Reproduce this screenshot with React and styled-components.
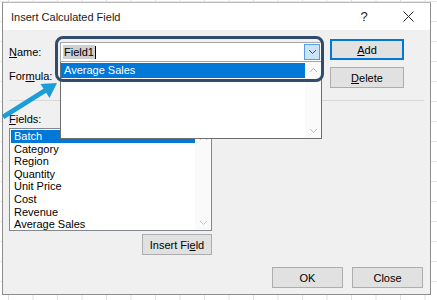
import React from "react";
import styled, { createGlobalStyle } from "styled-components";

const GlobalStyle = createGlobalStyle`
    body {
        margin: 0;
        font-family: "Liberation Sans", Arial, sans-serif;
        font-size: 11px;
        color: #000;
    }
`;

const Page = styled.div`
    position: relative;
    width: 437px;
    height: 300px;
    overflow: hidden;
    padding: 2px 0 0 2px;
    box-sizing: border-box;
    background-color: #fff;
    background-image:
        linear-gradient(to right, #e0e0e0 1px, transparent 1px),
        linear-gradient(to bottom, #e6e6e6 1px, transparent 1px);
    background-size: 24.5px 100%, 100% 20px;
    background-position: 8px 0, 0 1px;
`;

const Dialog = styled.div`
    width: 429px;
    box-sizing: border-box;
    border: 1px solid #8c8c8c;
    border-top-color: #b8b8b8;
    display: flex;
    flex-direction: column;
    background: #f0f0f0;
`;

const TitleBar = styled.div`
    height: 27px;
    flex-shrink: 0;
    background: #fff;
    display: flex;
    align-items: center;
    padding-left: 8px;
    font-size: 11px;
    color: #1a1a1a;
`;

const Title = styled.span`
    flex: 1;
`;

const TitleButton = styled.span`
    width: 44px;
    display: flex;
    justify-content: center;
    font-size: 13px;
`;

const Body = styled.div`
    display: flex;
    flex-direction: column;
    padding: 9px 6px 6px 6px;
`;

const FormGrid = styled.div`
    display: grid;
    grid-template-columns: 43px 262px 74px;
    grid-template-rows: 21px 21px;
    column-gap: 8px;
    row-gap: 7px;
`;

const Label = styled.div`
    line-height: 14px;
    height: 14px;
    white-space: nowrap;
    padding-top: ${(p) => p.$top || 0}px;
`;

const Combo = styled.div`
    margin-top: 3px;
    height: 20px;
    box-sizing: border-box;
    background: #fff;
    border: 1px solid #a6a6a6;
    display: flex;
    align-items: center;
    padding-left: 2px;
`;

const Selected = styled.span`
    background: #cfcfcf;
    line-height: 14px;
    padding: 0 1px;
`;

const Caret = styled.span`
    width: 1px;
    height: 13px;
    background: #000;
`;

const ArrowBox = styled.span`
    margin-left: auto;
    margin-right: 1px;
    width: 16px;
    height: 16px;
    box-sizing: border-box;
    background: #cce4f7;
    border: 1px solid #569de5;
    display: flex;
    align-items: center;
    justify-content: center;
`;

const Button = styled.button`
    height: 21px;
    box-sizing: border-box;
    background: #e1e1e1;
    border: ${(p) => (p.$default ? "2px solid #0078d7" : "1px solid #adadad")};
    font-family: inherit;
    font-size: 11px;
    padding: 0;
    color: #000;
    width: ${(p) => p.$w || 74}px;
`;

const Separator = styled.div`
    height: 1px;
    background: #d8d8d8;
    margin: 12px 0 11px;
`;

const FieldsColumn = styled.div`
    width: 203px;
    display: flex;
    flex-direction: column;
`;

const ListBox = styled.div`
    margin-top: 2px;
    height: 103px;
    box-sizing: border-box;
    background: #fff;
    border: 1px solid #828790;
    display: flex;
    padding: 1px 0 0 1px;
`;

const Items = styled.div`
    flex: 1;
`;

const Item = styled.div`
    line-height: 12.6px;
    height: 12.6px;
    padding-left: 3px;
    background: ${(p) => (p.$active ? "#0078d7" : "transparent")};
    color: ${(p) => (p.$active ? "#fff" : "#000")};
`;

const ScrollBar = styled.div`
    width: 16px;
    display: flex;
    flex-direction: column;
    justify-content: space-between;
    align-items: center;
    padding: 5px 0 4px;
    background: #fafafa;
`;

const FieldActions = styled.div`
    display: flex;
    justify-content: flex-end;
    margin-top: 3px;
`;

const Footer = styled.div`
    margin-top: 12px;
    display: flex;
    justify-content: flex-end;
    gap: 9px;
    padding-right: 1px;
`;

const DropList = styled.div`
    position: absolute;
    left: 60px;
    top: 62px;
    width: 262px;
    height: 77px;
    box-sizing: border-box;
    background: #fff;
    border: 1px solid #6e6e6e;
    border-top: none;
    display: flex;
`;

const DropItem = styled.div`
    flex: 1;
    align-self: flex-start;
    height: 15px;
    line-height: 15px;
    margin-top: 1px;
    padding-left: 3px;
    background: #0078d7;
    color: #fff;
`;

const Annotation = styled.div`
    position: absolute;
    left: 55px;
    top: 36px;
    width: 269px;
    height: 46px;
    box-sizing: border-box;
    border: 3px solid #2f4b6e;
    border-radius: 8px;
    pointer-events: none;
`;

const Pointer = styled.svg`
    position: absolute;
    left: 0;
    top: 0;
    pointer-events: none;
`;

const Chevron = ({ up, color = "#a0a0a0" }) => (
    <svg width="9" height="6" viewBox="0 0 9 6">
        <polyline
            points={up ? "1,5 4.5,1.5 8,5" : "1,1 4.5,4.5 8,1"}
            fill="none"
            stroke={color}
            strokeWidth="1"
        />
    </svg>
);

const fields = ["Batch", "Category", "Region", "Quantity", "Unit Price", "Cost", "Revenue", "Average Sales"];

function App() {
    return (
        <Page>
            <GlobalStyle />
            <Dialog>
                <TitleBar>
                    <Title>Insert Calculated Field</Title>
                    <TitleButton>?</TitleButton>
                    <TitleButton>
                        <svg width="11" height="11" viewBox="0 0 11 11">
                            <path d="M0.5 0.5 L10.5 10.5 M10.5 0.5 L0.5 10.5" stroke="#222" strokeWidth="1" />
                        </svg>
                    </TitleButton>
                </TitleBar>
                <Body>
                    <FormGrid>
                        <Label $top={6}>
                            <u>N</u>ame:
                        </Label>
                        <Combo>
                            <Selected>Field1</Selected>
                            <Caret />
                            <ArrowBox>
                                <Chevron color="#4a4a4a" />
                            </ArrowBox>
                        </Combo>
                        <Button $default>
                            <u>A</u>dd
                        </Button>
                        <Label $top={2}>
                            For<u>m</u>ula:
                        </Label>
                        <Combo />
                        <Button>
                            <u>D</u>elete
                        </Button>
                    </FormGrid>
                    <Separator />
                    <FieldsColumn>
                        <Label>
                            <u>F</u>ields:
                        </Label>
                        <ListBox>
                            <Items>
                                {fields.map((f, i) => (
                                    <Item key={f} $active={i === 0}>
                                        {f}
                                    </Item>
                                ))}
                            </Items>
                            <ScrollBar>
                                <Chevron up color="#c8c8c8" />
                                <Chevron color="#c8c8c8" />
                            </ScrollBar>
                        </ListBox>
                        <FieldActions>
                            <Button $w={70}>
                                Insert Fi<u>e</u>ld
                            </Button>
                        </FieldActions>
                    </FieldsColumn>
                    <Footer>
                        <Button $w={71}>OK</Button>
                        <Button $w={71}>Close</Button>
                    </Footer>
                </Body>
            </Dialog>
            <DropList>
                <DropItem>Average Sales</DropItem>
                <ScrollBar>
                    <Chevron up color="#b8b8b8" />
                    <Chevron color="#b8b8b8" />
                </ScrollBar>
            </DropList>
            <Annotation />
            <Pointer width="437" height="300" viewBox="0 0 437 300">
                <line x1="3" y1="117" x2="46" y2="90" stroke="#1a9dd8" strokeWidth="5" />
                <polygon points="57,83 49.5,98 40.5,84" fill="#1a9dd8" />
            </Pointer>
        </Page>
    );
}

export default App;
